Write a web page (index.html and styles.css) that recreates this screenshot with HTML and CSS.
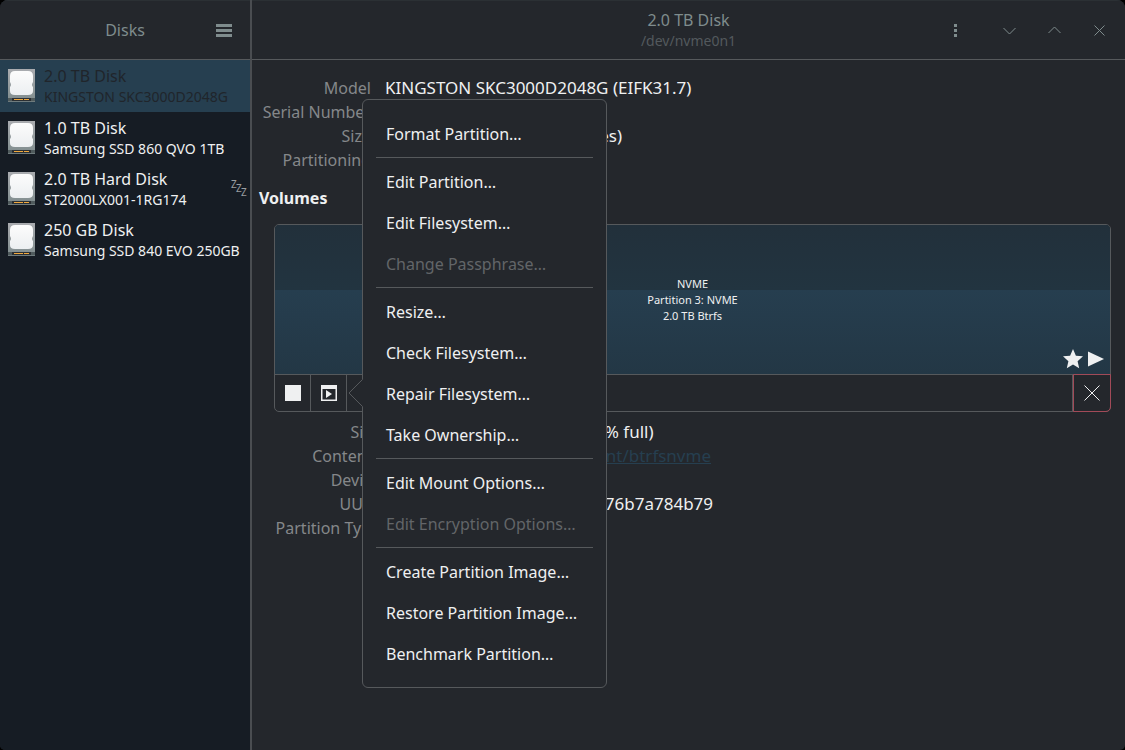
FILE: index.html
```
<!DOCTYPE html>
<html lang="en">
<head>
    <meta charset="UTF-8">
    <title>Disks</title>
    <link rel="stylesheet" href="styles.css">
</head>
<body>
    <!-- shared disk icon -->
    <svg class="defs" width="0" height="0" aria-hidden="true">
        <defs>
            <linearGradient id="caseFill" x1="0" y1="0" x2="0" y2="1">
                <stop offset="0" stop-color="#aaacb0"/>
                <stop offset="1" stop-color="#7f8c8d"/>
            </linearGradient>
            <linearGradient id="plateFill" x1="0" y1="0" x2="0" y2="1">
                <stop offset="0" stop-color="#fcfcfc"/>
                <stop offset="1" stop-color="#eceff1"/>
            </linearGradient>
            <symbol id="disk" viewBox="0 0 27 33">
                <rect width="27" height="33" fill="url(#caseFill)"/>
                <path d="M7 2H20Q25 2 25 7V13Q23 16 25 18V22Q25 26 20 26H7Q2 26 2 22V18Q4 16 2 13V7Q2 2 7 2Z" fill="url(#plateFill)"/>
                <rect y="29" width="27" height="3" fill="#4f5a5c"/>
                <rect x="4" y="29" width="19" height="3" fill="#2b2f33"/>
                <rect x="6" y="30" width="9" height="1" fill="#f0a83d"/>
                <rect x="16" y="30" width="5" height="1" fill="#f0a83d"/>
                <rect y="32" width="27" height="1" fill="#6f7b7d"/>
            </symbol>
        </defs>
    </svg>

    <div class="window">
        <aside class="sidebar">
            <header class="header side-header">
                <h1 class="title">Disks</h1>
                <button class="icon-button menu-button" aria-label="Main menu">
                    <svg width="16" height="13" viewBox="0 0 16 13" fill="currentColor"><path d="M0 0H16V3H0ZM0 5H16V8H0ZM0 10H16V13H0Z"/></svg>
                </button>
            </header>
            <nav class="disk-list">
                <button class="disk selected">
                    <svg class="disk-icon"><use href="#disk"/></svg>
                    <span class="disk-text">
                        <span class="disk-name">2.0 TB Disk</span>
                        <span class="disk-model">KINGSTON SKC3000D2048G</span>
                    </span>
                </button>
                <button class="disk">
                    <svg class="disk-icon"><use href="#disk"/></svg>
                    <span class="disk-text">
                        <span class="disk-name">1.0 TB Disk</span>
                        <span class="disk-model">Samsung SSD 860 QVO 1TB</span>
                    </span>
                </button>
                <button class="disk">
                    <svg class="disk-icon"><use href="#disk"/></svg>
                    <span class="disk-text">
                        <span class="disk-name">2.0 TB Hard Disk</span>
                        <span class="disk-model">ST2000LX001-1RG174</span>
                    </span>
                    <svg class="sleep-icon" width="16" height="18" viewBox="0 0 16 18" fill="currentColor">
                        <text x="0" y="8">Z</text>
                        <text x="5" y="12">Z</text>
                        <text x="10" y="16">Z</text>
                    </svg>
                </button>
                <button class="disk">
                    <svg class="disk-icon"><use href="#disk"/></svg>
                    <span class="disk-text">
                        <span class="disk-name">250 GB Disk</span>
                        <span class="disk-model">Samsung SSD 840 EVO 250GB</span>
                    </span>
                </button>
            </nav>
        </aside>

        <main class="main">
            <header class="header main-header">
                <div class="titles">
                    <h2 class="title">2.0 TB Disk</h2>
                    <p class="subtitle">/dev/nvme0n1</p>
                </div>
                <div class="window-controls">
                    <button class="icon-button more" aria-label="Drive options">
                        <svg width="15" height="15" viewBox="0 0 15 15" fill="currentColor"><path d="M6 1H9V4H6ZM6 6H9V9H6ZM6 11H9V14H6Z"/></svg>
                    </button>
                    <button class="icon-button" aria-label="Minimize">
                        <svg width="15" height="15" viewBox="0 0 15 15"><path d="M1.500 5L7.500 11L13.500 5"/></svg>
                    </button>
                    <button class="icon-button" aria-label="Maximize">
                        <svg width="15" height="15" viewBox="0 0 15 15"><path d="M1.500 10L7.500 4L13.500 10"/></svg>
                    </button>
                    <button class="icon-button" aria-label="Close">
                        <svg width="15" height="15" viewBox="0 0 15 15"><path d="M2.500 2.500L12.500 12.500M12.500 2.500L2.500 12.500"/></svg>
                    </button>
                </div>
            </header>

            <div class="content">
                <dl class="info">
                    <dt>Model</dt><dd>KINGSTON SKC3000D2048G (EIFK31.7)</dd>
                    <dt>Serial Number</dt><dd></dd>
                    <dt>Size</dt><dd>2.0 TB (2048408248320 bytes)</dd>
                    <dt>Partitioning</dt><dd></dd>
                </dl>

                <h3 class="section">Volumes</h3>

                <div class="volumes">
                    <div class="volume-box">
                        <div class="volume">
                            <span>NVME</span>
                            <span>Partition 3: NVME</span>
                            <span>2.0 TB Btrfs</span>
                            <svg class="marks" width="42" height="20" viewBox="0 0 42 20" fill="currentColor">
                                <path d="M11 0L13.900 6.700L21 7.300L15.600 12.200L17.200 19.200L11 15.500L4.800 19.200L6.400 12.200L1 7.300L8.100 6.700Z"/>
                                <path d="M26 2.500L42 10L26 17.500Z"/>
                            </svg>
                        </div>
                        <div class="toolbar">
                            <button class="tool" aria-label="Unmount">
                                <svg width="16" height="16" viewBox="0 0 16 16" fill="currentColor"><path d="M0 0H16V16H0Z"/></svg>
                            </button>
                            <button class="tool" aria-label="Mount options">
                                <svg width="16" height="16" viewBox="0 0 16 16" fill="currentColor"><path fill-rule="evenodd" d="M0 0H16V16H0ZM1.500 4V14.500H14.500V4Z"/><path d="M5 5L11 9L5 13Z"/></svg>
                            </button>
                            <div class="menu-anchor">
                                <button class="tool" aria-label="Partition options"></button>
                                <div class="popover" role="menu">
                                    <svg class="arrow" width="15" height="28" viewBox="0 0 15 28"><path class="arrow-fill" d="M15 0L1 14L15 28Z"/><path class="arrow-line" d="M14.500 0.500L1 14L14.500 27.500"/></svg>
                                    <button class="item" role="menuitem">Format Partition…</button>
                                    <hr>
                                    <button class="item" role="menuitem">Edit Partition…</button>
                                    <button class="item" role="menuitem">Edit Filesystem…</button>
                                    <button class="item" role="menuitem" disabled>Change Passphrase…</button>
                                    <hr>
                                    <button class="item" role="menuitem">Resize…</button>
                                    <button class="item" role="menuitem">Check Filesystem…</button>
                                    <button class="item" role="menuitem">Repair Filesystem…</button>
                                    <button class="item" role="menuitem">Take Ownership…</button>
                                    <hr>
                                    <button class="item" role="menuitem">Edit Mount Options…</button>
                                    <button class="item" role="menuitem" disabled>Edit Encryption Options…</button>
                                    <hr>
                                    <button class="item" role="menuitem">Create Partition Image…</button>
                                    <button class="item" role="menuitem">Restore Partition Image…</button>
                                    <button class="item" role="menuitem">Benchmark Partition…</button>
                                </div>
                            </div>
                            <button class="tool delete" aria-label="Delete partition">
                                <svg width="16" height="16" viewBox="0 0 16 16"><path d="M0.500 0.500L15.500 15.500M15.500 0.500L0.500 15.500"/></svg>
                            </button>
                        </div>
                    </div>

                    <dl class="info volume-info">
                        <dt>Size</dt><dd>2.0 TB — 1.24 TB free (39.4% full)</dd>
                        <dt>Contents</dt><dd>Btrfs — Mounted at <a href="#">/srv/mnt/btrfsnvme</a></dd>
                        <dt>Device</dt><dd></dd>
                        <dt>UUID</dt><dd>0b1c7d52-6f3e-4a90-8d21-76b7a784b79</dd>
                        <dt>Partition Type</dt><dd></dd>
                    </dl>
                </div>
            </div>
        </main>
    </div>
</body>
</html>
```
FILE: styles.css
```
* {
    box-sizing: border-box;
}
html {
    background: #000;
}
body {
    margin: 0;
    font-family: "Noto Sans", sans-serif;
    font-size: 16px;
    line-height: 24px;
    color: #eff0f1;
}
h1, h2, h3, p, dl, dd {
    margin: 0;
}
button {
    font: inherit;
    color: inherit;
    background: none;
    border: none;
    padding: 0;
    text-align: left;
}
svg {
    display: block;
}
.defs {
    position: absolute;
}
.window {
    display: flex;
    min-height: 100vh;
    background: #24272c;
    border-radius: 8px 8px 5px 5px;
    overflow: hidden;
}

/* header bars */
.header {
    display: flex;
    align-items: center;
    height: 60px;
    border-bottom: 1px solid #56595c;
    border-top: 1px solid #2b3034;
    background: #24272c;
    color: #7f8c8d;
}
.title {
    font-size: 16px;
    font-weight: normal;
    line-height: 22px;
}
.subtitle {
    font-size: 14px;
    line-height: 20px;
    color: #53595d;
}
.icon-button svg {
    stroke: currentColor;
    fill: none;
}
.icon-button svg[fill] {
    stroke: none;
    fill: currentColor;
}

/* sidebar */
.sidebar {
    flex: 0 0 252px;
    border-right: 2px solid #4a4d51;
    background: #161c24;
}
.side-header {
    position: relative;
    justify-content: center;
}
.menu-button {
    position: absolute;
    right: 18px;
}
.disk {
    display: flex;
    align-items: center;
    width: 100%;
    height: 51px;
    padding: 0 3px 0 8px;
    gap: 9px;
}
.disk.selected {
    height: 52px;
    background: #263f50;
    color: #20252b;
}
.disk-icon {
    width: 27px;
    height: 33px;
    margin-bottom: 1px;
}
.disk-text {
    display: flex;
    flex: 1;
    flex-direction: column;
    white-space: nowrap;
}
.disk-name {
    line-height: 22px;
}
.disk-model {
    font-size: 14px;
    line-height: 20px;
}
.sleep-icon {
    overflow: visible;
    color: #9a9da0;
    font-size: 10px;
}

/* main area */
.main {
    flex: 1;
    min-width: 0;
}
.main-header {
    position: relative;
    justify-content: center;
    text-align: center;
}
.window-controls {
    position: absolute;
    right: 18px;
    display: flex;
    gap: 30px;
}
.more {
    margin-right: 9px;
}
.content {
    padding: 16px 14px 16px 7px;
}
.info {
    display: grid;
    grid-template-columns: 112px 1fr;
    grid-auto-rows: 24px;
    column-gap: 14px;
    white-space: nowrap;
}
.info dt {
    text-align: right;
    color: #85878a;
}
.info dd {
    font-size: 17px;
}
.info a {
    color: #263f50;
}
.section {
    margin: 14px 0;
    font-size: 16px;
    line-height: 24px;
}
.volumes {
    padding-left: 15px;
}
.volume-box {
    border: 1px solid #56595c;
    border-radius: 5px;
}
.volume {
    position: relative;
    display: flex;
    flex-direction: column;
    align-items: center;
    justify-content: center;
    height: 149px;
    font-size: 11px;
    line-height: 16px;
    border-radius: 4px 4px 0 0;
    background:
        linear-gradient(to bottom, #22303b, #223440) 0 0 / 100% 65px no-repeat,
        linear-gradient(to bottom, #263e4f, #233745) 0 65px / 100% 84px no-repeat;
}
.marks {
    position: absolute;
    right: 6px;
    bottom: 5px;
}
.toolbar {
    display: flex;
    height: 37px;
    border-top: 1px solid #56595c;
}
.tool {
    display: flex;
    align-items: center;
    justify-content: center;
    width: 36px;
    height: 36px;
    border-right: 1px solid #56595c;
}
.delete {
    width: 38px;
    height: 38px;
    margin: -1px -1px -1px auto;
    border: 1px solid #a24a58;
    border-radius: 0 0 5px 0;
    box-shadow: -1px 0 #56595c;
}
.delete svg {
    stroke: currentColor;
}
.volume-info {
    margin-top: 8px;
    grid-template-columns: 106px 1fr;
    column-gap: 12px;
}

/* partition menu */
.menu-anchor {
    position: relative;
}
.popover {
    position: absolute;
    z-index: 1;
    top: -276px;
    left: 15px;
    width: 245px;
    padding: 13px;
    background: #24272c;
    border: 1px solid #56595c;
    border-radius: 6px;
}
.arrow {
    position: absolute;
    left: -15px;
    top: 279px;
}
.arrow-fill {
    fill: #24272c;
}
.arrow-line {
    fill: none;
    stroke: #56595c;
}
.item {
    display: block;
    width: 100%;
    height: 41px;
    padding: 0 10px;
    white-space: nowrap;
}
.item:disabled {
    color: #626568;
}
.popover hr {
    height: 1px;
    margin: 3px 0;
    border: none;
    background: #56595c;
}
```
